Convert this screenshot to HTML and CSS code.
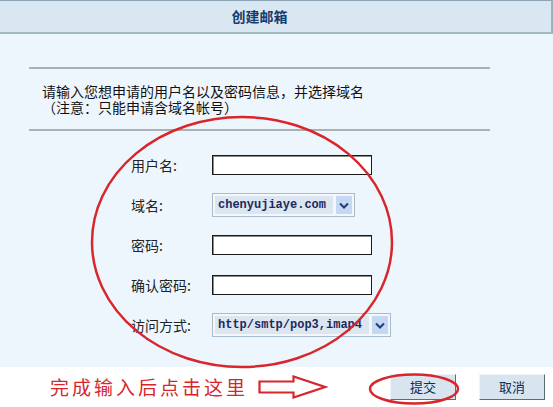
FILE: index.html
```html
<!DOCTYPE html>
<html lang="zh-CN">
<head>
  <meta charset="UTF-8">
  <title>创建邮箱</title>
  <link rel="stylesheet" href="styles.css">
</head>
<body>
  <div class="page">
    <div class="titlebar">创建邮箱</div>

    <div class="content">
      <div class="rule"></div>
      <p class="intro">请输入您想申请的用户名以及密码信息，并选择域名<br>（注意：只能申请含域名帐号）</p>
      <div class="rule"></div>

      <form class="signup">
        <div class="row">
          <label>用户名:</label>
          <input type="text" class="field">
        </div>
        <div class="row">
          <label>域名:</label>
          <div class="combo combo-domain">
            <span class="combo-text">chenyujiaye.com</span>
            <span class="combo-btn">
              <svg width="10" height="7" viewBox="0 0 10 7"><path d="M1 1.5 L5 5.5 L9 1.5" fill="none" stroke="#1f3d7a" stroke-width="2"/></svg>
            </span>
          </div>
        </div>
        <div class="row">
          <label>密码:</label>
          <input type="password" class="field">
        </div>
        <div class="row">
          <label>确认密码:</label>
          <input type="password" class="field">
        </div>
        <div class="row">
          <label>访问方式:</label>
          <div class="combo combo-access">
            <span class="combo-text">http/smtp/pop3,imap4</span>
            <span class="combo-btn">
              <svg width="10" height="7" viewBox="0 0 10 7"><path d="M1 1.5 L5 5.5 L9 1.5" fill="none" stroke="#1f3d7a" stroke-width="2"/></svg>
            </span>
          </div>
        </div>
      </form>
    </div>

    <div class="actions">
      <span class="hint">完成输入后点击这里</span>
      <svg class="arrow" width="70" height="24" viewBox="0 0 70 24">
        <path d="M1.5 6.5 H35.5 V1.5 L67 12 L35.5 22.5 V17.5 H1.5 Z" fill="none" stroke="#d6262c" stroke-width="2.2"/>
      </svg>
      <button type="button" class="btn btn-submit">提交</button>
      <button type="button" class="btn">取消</button>
    </div>

    <!-- red annotation marks drawn over the form -->
    <svg class="marks" width="553" height="407" viewBox="0 0 553 407">
      <ellipse cx="242" cy="242" rx="150" ry="125" fill="none" stroke="#d8262c" stroke-width="2.5"/>
      <ellipse cx="414" cy="389" rx="44" ry="14.5" fill="none" stroke="#d8262c" stroke-width="2.5"/>
    </svg>
  </div>
</body>
</html>
```

FILE: styles.css
```css
body {
  margin: 0;
  background: #ffffff;
  font-family: "Noto Sans CJK SC", "Liberation Sans", sans-serif;
  font-size: 13px;
  color: #111;
}

.page {
  position: relative;
  width: 553px;
  height: 407px;
  overflow: hidden;
}

.titlebar {
  height: 31px;
  line-height: 31px;
  background: #d9e7f3;
  border-top: 1px solid #8ea3b5;
  border-bottom: 2px solid #a2b8c1;
  border-right: 2px solid #9eb1be;
  padding-right: 32px;
  text-align: center;
  font-weight: bold;
  font-size: 14px;
  color: #163c6c;
}

.content {
  height: 333px;
  background: #eef6fd;
  padding-top: 33px;
  box-sizing: border-box;
}

.rule {
  width: 461px;
  height: 2px;
  margin-left: 29px;
  background: #a9b1b5;
}

.intro {
  margin: 0;
  padding: 15px 0 13px 42px;
  line-height: 16px;
  font-family: "Liberation Sans", "Noto Sans CJK SC", sans-serif;
  font-size: 14px;
  color: #111;
}

.signup {
  padding-top: 14px;
}

.row {
  display: flex;
  align-items: center;
  height: 40px;
  padding-left: 131px;
}

.row label {
  width: 81px;
  font-size: 14px;
  color: #222;
}

.field {
  width: 160px;
  height: 20px;
  box-sizing: border-box;
  border: 1px solid #1a1a1a;
  box-shadow: inset 1px 1px 0 #8a8a8a;
  background: #fff;
  margin: 0;
  padding: 0;
}

.combo {
  display: flex;
  align-items: center;
  height: 24px;
  box-sizing: border-box;
  border: 1px solid #a9bccd;
  background: #f3f7fb;
  padding: 0 2px;
}

.combo-domain {
  width: 143px;
}

.combo-access {
  width: 179px;
}

.combo-text {
  flex: 1;
  height: 18px;
  line-height: 18px;
  padding-left: 3px;
  background: #dce6f1;
  font-family: "Liberation Mono", monospace;
  font-size: 12px;
  font-weight: bold;
  color: #1c2a5c;
  white-space: nowrap;
}

.combo-btn {
  display: flex;
  align-items: center;
  justify-content: center;
  flex: none;
  width: 16px;
  height: 18px;
  margin-left: 3px;
  background: #c4d8f3;
}

.actions {
  display: flex;
  align-items: center;
  height: 39px;
  background: #fff;
}

.hint {
  margin-left: 50px;
  font-size: 19px;
  letter-spacing: 3px;
  color: #d6262c;
}

.arrow {
  margin-left: 10px;
}

.btn {
  width: 66px;
  height: 26px;
  margin-left: 23px;
  padding: 0;
  background: #d8e4ee;
  border: 1px solid;
  border-color: #eef4f8 #5d6c7a #5d6c7a #eef4f8;
  font-family: "Noto Sans CJK SC", sans-serif;
  font-size: 13px;
  color: #102c5c;
}

.btn-submit {
  margin-left: 62px;
}

.marks {
  position: absolute;
  left: 0;
  top: 0;
  pointer-events: none;
}
```
